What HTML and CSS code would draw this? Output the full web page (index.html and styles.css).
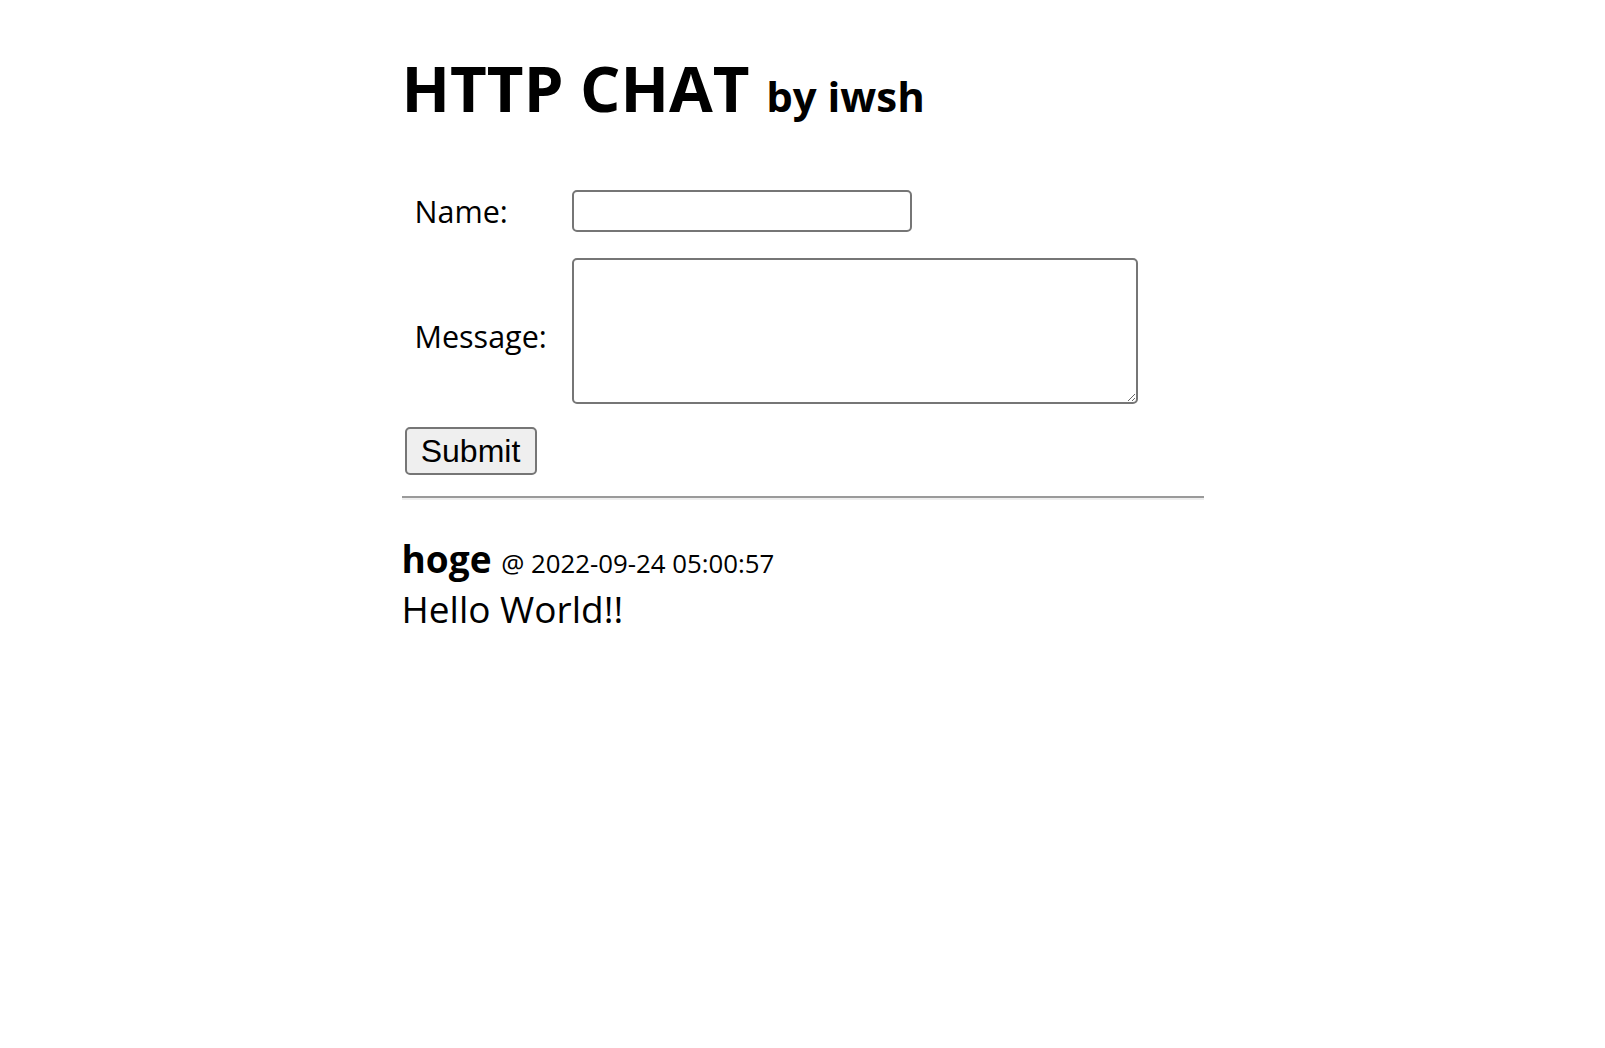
FILE: index.html
```html
<!DOCTYPE html>
<html lang="ja">
<head>
<meta charset="utf-8">
<title>HTTP CHAT</title>
<link rel="stylesheet" href="styles.css">
</head>
<body>
<div class="page">
  <h1 class="title">HTTP CHAT <small class="by">by iwsh</small></h1>
  <form class="chat-form">
    <div class="fields">
      <label class="label" for="name">Name:</label>
      <input class="name-input" id="name" type="text">
      <label class="label label-msg" for="message">Message:</label>
      <textarea class="msg-input" id="message"></textarea>
    </div>
    <button class="submit" type="button">Submit</button>
  </form>
  <hr class="rule">
  <div class="message">
    <div class="msg-head"><span class="msg-name">hoge</span> <span class="msg-time">@ 2022-09-24 05:00:57</span></div>
    <div class="msg-body">Hello World!!</div>
  </div>
</div>
</body>
</html>
```
FILE: styles.css
```css
html, body {
  margin: 0;
  padding: 0;
  background: #ffffff;
  color: #000000;
}

body {
  font-family: "Open Sans", "Noto Sans", sans-serif;
}

.page {
  width: 802px;
  margin: 0 auto;
}

.title {
  margin: 48px 0 0 0;
  font-size: 63.5px;
  line-height: 80px;
  font-weight: 700;
}

.by {
  font-size: 42px;
  line-height: 1;
  font-weight: 700;
}

.chat-form {
  margin-top: 62px;
}

.fields {
  display: grid;
  grid-template-columns: 170px 1fr;
  row-gap: 26px;
  align-items: center;
}

.label {
  font-size: 30.5px;
  line-height: 42px;
  padding-left: 13px;
}

.label-msg {
  align-self: start;
  padding-top: 57px;
}

.name-input {
  box-sizing: border-box;
  width: 340px;
  height: 42px;
  border: 2px solid #767676;
  border-radius: 5px;
  margin: 0;
  padding: 2px 6px;
  font-size: 26px;
  font-family: "Liberation Sans", sans-serif;
  background: #ffffff;
}

.msg-input {
  box-sizing: border-box;
  width: 566px;
  height: 146px;
  border: 2px solid #767676;
  border-radius: 5px;
  margin: 0;
  padding: 4px;
  font-size: 26px;
  font-family: "Liberation Mono", monospace;
  background: #ffffff;
  display: block;
}

.submit {
  display: block;
  box-sizing: border-box;
  margin: 23px 0 0 3px;
  width: 132px;
  height: 48px;
  padding: 0;
  border: 2px solid #767676;
  border-radius: 5px;
  background: #efefef;
  color: #000000;
  font-family: "Liberation Sans", Arial, sans-serif;
  font-size: 32px;
  line-height: 44px;
}

.rule {
  margin: 21px 0 0 0;
  height: 0;
  border: 0;
  border-top: 2px solid #9a9a9a;
  border-bottom: 2px solid #eeeeee;
}

.message {
  margin-top: 39px;
}

.msg-head {
  font-size: 37px;
  line-height: 40px;
}

.msg-name {
  font-weight: 700;
}

.msg-time {
  font-size: 25.8px;
  line-height: 1;
}

.msg-body {
  margin-top: 6px;
  font-size: 37px;
  line-height: 48px;
}
```
